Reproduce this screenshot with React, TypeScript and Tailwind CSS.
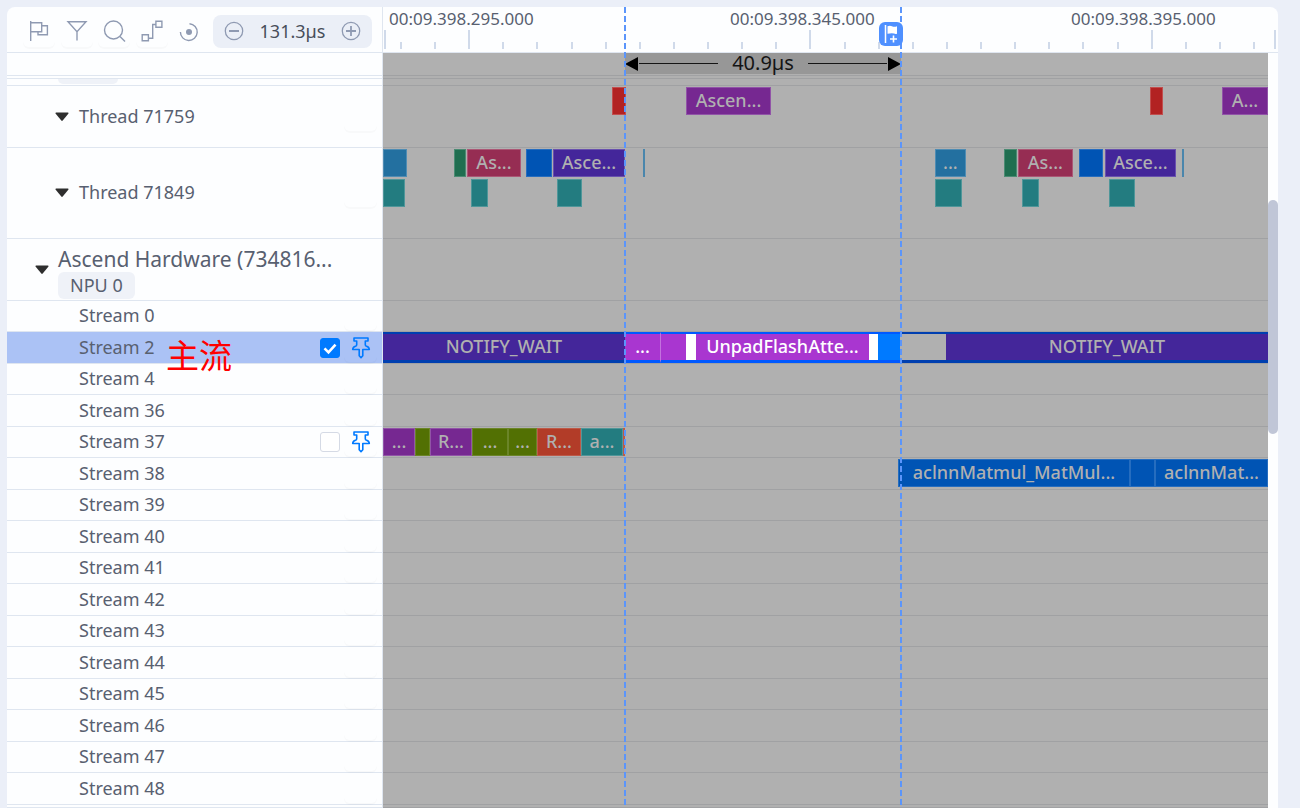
import clsx from "clsx";

interface Slice {
  start: number;
  end: number;
  color: string;
  label?: string;
}

interface Stream {
  name: string;
  slices?: Slice[];
  selected?: boolean;
  checkable?: boolean;
}

// Visible span of the timeline, in canvas units
const SPAN = 885;
const RULER_SPAN = 895;
const pct = (value: number, span = SPAN) => `${(value / span) * 100}%`;

const RED = "bg-[#b22222] border-white/20";
const PURPLE = "bg-[#762891] border-white/20";
const SKY = "bg-[#2370a0] border-white/20";
const TEAL = "bg-[#237c80] border-white/20";
const GREEN = "bg-[#1f6e50] border-white/20";
const PINK = "bg-[#962d53] border-white/20";
const ROYAL = "bg-[#0054b4] border-white/15";
const VIOLET = "bg-[#44269a] border-white/20";
const OLIVE = "bg-[#527003] border-white/15";
const ORANGE = "bg-[#b23c28] border-white/15";

const thread71759: Slice[] = [
  { start: 229, end: 243, color: RED },
  { start: 303, end: 388, color: PURPLE, label: "Ascen..." },
  { start: 767, end: 780, color: RED },
  { start: 839, end: 885, color: PURPLE, label: "A..." },
];

const thread71849Top: Slice[] = [
  { start: 0, end: 24, color: SKY },
  { start: 71, end: 83, color: GREEN },
  { start: 84, end: 138, color: PINK, label: "As..." },
  { start: 143, end: 169, color: ROYAL },
  { start: 170, end: 242, color: VIOLET, label: "Asce..." },
  { start: 260, end: 262, color: "bg-[#4a86ac] border-[#4a86ac]" },
  { start: 552, end: 583, color: SKY, label: "..." },
  { start: 621, end: 634, color: GREEN },
  { start: 635, end: 690, color: PINK, label: "As..." },
  { start: 696, end: 720, color: ROYAL },
  { start: 722, end: 793, color: VIOLET, label: "Asce..." },
  { start: 799, end: 801, color: "bg-[#4a86ac] border-[#4a86ac]" },
];

const thread71849Bottom: Slice[] = [
  { start: 0, end: 22, color: TEAL },
  { start: 88, end: 105, color: TEAL },
  { start: 174, end: 199, color: TEAL },
  { start: 552, end: 579, color: TEAL },
  { start: 639, end: 656, color: TEAL },
  { start: 726, end: 752, color: TEAL },
];

const mainStream: Slice[] = [
  { start: 0, end: 242, color: "bg-[#44269a] border-[#003fb0]", label: "NOTIFY_WAIT" },
  { start: 242, end: 277, color: "bg-[#a936d0] border-[#0059ff] text-white", label: "..." },
  { start: 277, end: 303, color: "bg-[#a936d0] border-[#0059ff] border-l border-l-white/30" },
  { start: 303, end: 313, color: "bg-white border-[#0059ff]" },
  { start: 313, end: 486, color: "bg-[#a936d0] border-[#0059ff] text-white", label: "UnpadFlashAtte..." },
  { start: 486, end: 495, color: "bg-white border-[#0059ff]" },
  { start: 495, end: 517, color: "bg-[#007aff] border-[#0059ff]" },
  { start: 517, end: 563, color: "bg-[#b0b0b0] border-[#003fb0]" },
  { start: 563, end: 885, color: "bg-[#44269a] border-[#003fb0]", label: "NOTIFY_WAIT" },
];

const stream37: Slice[] = [
  { start: 0, end: 32, color: PURPLE, label: "..." },
  { start: 32, end: 47, color: OLIVE },
  { start: 47, end: 89, color: PURPLE, label: "R..." },
  { start: 89, end: 125, color: OLIVE, label: "..." },
  { start: 125, end: 154, color: OLIVE, label: "..." },
  { start: 154, end: 198, color: ORANGE, label: "R..." },
  { start: 198, end: 240, color: TEAL, label: "a..." },
  { start: 240, end: 242, color: ORANGE },
];

const stream38: Slice[] = [
  { start: 515, end: 747, color: ROYAL, label: "aclnnMatmul_MatMul..." },
  { start: 747, end: 772, color: ROYAL },
  { start: 772, end: 885, color: ROYAL, label: "aclnnMat..." },
];

const streams: Stream[] = [
  { name: "Stream 0" },
  { name: "Stream 2", slices: mainStream, selected: true, checkable: true },
  { name: "Stream 4" },
  { name: "Stream 36" },
  { name: "Stream 37", slices: stream37, checkable: true },
  { name: "Stream 38", slices: stream38 },
  { name: "Stream 39" },
  { name: "Stream 40" },
  { name: "Stream 41" },
  { name: "Stream 42" },
  { name: "Stream 43" },
  { name: "Stream 44" },
  { name: "Stream 45" },
  { name: "Stream 46" },
  { name: "Stream 47" },
  { name: "Stream 48" },
];

// One tall tick at each edge, then a tall one for every ten short ones
const ticks = [1, ...Array.from({ length: 26 }, (_, i) => 17 + i * 34.14), 891].map((x, i, all) => ({
  width: (all[i + 1] ?? RULER_SPAN) - x,
  tall: i === 0 || i === all.length - 1 || i % 10 === 3,
}));

function Lane({ slices, framed }: { slices: Slice[]; framed?: boolean }) {
  return (
    <div className={clsx("flex w-full shrink-0 overflow-hidden", framed ? "h-[31px]" : "h-7")}>
      {slices.map((s, i) => (
        <div
          key={s.start}
          className={clsx(
            "flex shrink-0 items-center justify-center overflow-hidden pb-[2px] text-lg leading-6 font-medium whitespace-nowrap",
            framed ? "border-t-2 border-b-3" : "border",
            !s.color.includes("text-white") && "text-[#b0b0b0]",
            s.color
          )}
          style={{
            marginLeft: pct(s.start - (i ? slices[i - 1].end : 0)),
            width: pct(s.end - s.start),
          }}
        >
          {s.label}
        </div>
      ))}
    </div>
  );
}

function Row({
  height,
  side,
  sideClass,
  children,
}: {
  height: string;
  side?: React.ReactNode;
  sideClass?: string;
  children?: React.ReactNode;
}) {
  return (
    <div className={clsx("flex shrink-0", height)}>
      <div className="flex w-[376px] shrink-0 border-r border-b border-[#dfe6f0]">
        <div className={clsx("flex min-w-0 flex-1", sideClass)}>{side}</div>
      </div>
      <div className="min-w-0 flex-1 border-b border-[#a0a1a3] bg-[#b0b0b0]">{children}</div>
    </div>
  );
}

function Caret() {
  return (
    <button type="button" aria-label="Collapse" className="shrink-0">
      <svg width="14" height="10" viewBox="0 0 14 10">
        <path d="M1 .5h12q1 .3.3 1.200L7.700 8.600q-.7.8-1.400 0L.7 1.700Q0 .8 1 .5Z" fill="#2e2e2e" />
      </svg>
    </button>
  );
}

function PinButton({ children, label }: { children?: React.ReactNode; label: string }) {
  return (
    <button
      type="button"
      aria-label={label}
      className="flex h-7 w-[33px] shrink-0 items-center justify-center rounded-md shadow-[0_2px_0_rgba(0,0,0,0.02)]"
    >
      {children}
    </button>
  );
}

function PinIcon() {
  return (
    <svg width="20" height="22" viewBox="0 0 20 22" fill="none" stroke="#007aff" strokeWidth="1.6" strokeLinejoin="round">
      <path d="M3 1h14v3h-2.700v3.700q0 1.200 1.200 1.500 2.800.8 2.800 3.300H11.800v6.300L10 20.700l-1.800-1.900v-6.300H1.700q0-2.500 2.800-3.300 1.200-.3 1.200-1.500V4H3Z" />
    </svg>
  );
}

function ToolButton({ label, shadow = true, children }: { label: string; shadow?: boolean; children: React.ReactNode }) {
  return (
    <button
      type="button"
      aria-label={label}
      className={clsx(
        "flex size-8 items-center justify-center rounded-md",
        shadow && "shadow-[0_2px_0_rgba(0,0,0,0.02)]"
      )}
    >
      <svg width="24" height="24" viewBox="0 0 24 24" fill="none" stroke="#8f9ab2" strokeWidth="1.4">
        {children}
      </svg>
    </button>
  );
}

function Toolbar() {
  return (
    <div className="flex w-[376px] shrink-0 items-center border-r border-[#dfe6f0] pt-[3px] pr-[10px] pl-4">
      <div className="flex flex-1 justify-between">
        <ToolButton label="Flags">
          <path d="M3.7 2v20M3.7 3.7h11v9h-11M14.7 6.8h5.7v9H11v-3" />
        </ToolButton>
        <ToolButton label="Filter">
          <path d="M3 2.7h18l-9 9.9zM12 12.6v9" />
        </ToolButton>
        <ToolButton label="Search">
          <circle cx="11.5" cy="11" r="9" />
          <path d="m18 17.5 5 5" />
        </ToolButton>
        <ToolButton label="Link events">
          <path d="M2.2 15.7h6.2v6H2.2zM15.900 2.2h6v6h-6zM8.400 19.2h4.300V5.500h3.200" />
        </ToolButton>
        <ToolButton label="Reset view" shadow={false}>
          <path d="M12.500 4.700a8.400 8.400 0 1 1-9.100 8.300" />
          <circle cx="12" cy="13" r="3" fill="#8f9ab2" stroke="none" />
        </ToolButton>
      </div>
      <div className="ml-2 flex h-[33px] w-[159px] items-center justify-between rounded-lg bg-[#ebeff7] px-[11px] text-lg text-[#484e5a]">
        <button type="button" aria-label="Zoom out">
          <svg width="20" height="20" viewBox="0 0 20 20" fill="none" stroke="#8f9ab2" strokeWidth="1.3">
            <circle cx="10" cy="10" r="8.7" />
            <path d="M5 10h10" strokeWidth="1.8" />
          </svg>
        </button>
        <span>131.3µs</span>
        <button type="button" aria-label="Zoom in">
          <svg width="20" height="20" viewBox="0 0 20 20" fill="none" stroke="#8f9ab2" strokeWidth="1.3">
            <circle cx="10" cy="10" r="8.7" />
            <path d="M5 10h10M10 5v10" strokeWidth="1.8" />
          </svg>
        </button>
      </div>
    </div>
  );
}

function Ruler() {
  return (
    <div className="flex min-w-0 flex-1 flex-col overflow-hidden">
      <div className="flex h-[23px] text-[17px] leading-6 whitespace-nowrap">
        {["00:09.398.295.000", "00:09.398.345.000", "00:09.398.395.000"].map((time) => (
          <span key={time} className="shrink-0 pl-[6px]" style={{ width: pct(341, RULER_SPAN) }}>
            {time}
          </span>
        ))}
      </div>
      <div className="flex h-[19px] items-end" style={{ paddingLeft: pct(1, RULER_SPAN) }}>
        {ticks.map((tick, i) => (
          <span
            key={i}
            className={clsx("shrink-0 border-l-2 border-[#d0daea]", tick.tall ? "h-[19px]" : "h-[7px]")}
            style={{ width: pct(tick.width, RULER_SPAN - 1) }}
          />
        ))}
      </div>
    </div>
  );
}

function Duration() {
  return (
    <div
      className="flex h-[21px] items-center bg-[#979797] text-xl leading-5 text-[#141414]"
      style={{ marginLeft: pct(242), width: pct(276) }}
    >
      <svg width="14" height="16" viewBox="0 0 14 16" className="shrink-0">
        <path d="M0 8 13 1v14Z" />
      </svg>
      <span className="h-px flex-1 bg-[#141414]" />
      <span className="px-[14px] pb-px">40.9µs</span>
      <span className="h-px flex-1 bg-[#141414]" />
      <svg width="14" height="16" viewBox="0 0 14 16" className="shrink-0">
        <path d="M14 8 1 1v14Z" />
      </svg>
    </div>
  );
}

// Dashed lines at both ends of the chosen range, with the flag marker on the second
function RangeMarkers() {
  return (
    <div className="pointer-events-none absolute inset-y-0 right-[10px] left-[376px]">
      {[241, 517].map((x) => (
        <div
          key={x}
          className="absolute inset-y-0 w-[2px] bg-[repeating-linear-gradient(to_bottom,#5b95fb_0px,#5b95fb_6px,transparent_6px,transparent_9px)]"
          style={{ left: pct(x) }}
        />
      ))}
      <div
        className="absolute top-[15px] flex size-6 items-center justify-center rounded-md bg-[#4f90ff]"
        style={{ left: pct(496) }}
      >
        <svg width="24" height="24" viewBox="0 0 24 24" fill="none" stroke="white">
          <path d="M6.5 3v18" strokeWidth="1.5" />
          <path d="M8.5 4.3q2.500-1 4.500 0t5 0v7.400q-1.500.6-3-.1-2-1-6.500.2Z" fill="white" stroke="none" />
          <path d="M14.5 13.5v7M11 17h7" strokeWidth="1.6" />
        </svg>
      </div>
    </div>
  );
}

function StreamSide({ stream }: { stream: Stream }) {
  return (
    <>
      <label htmlFor={stream.name} className="flex-1 pb-[2px]">
        {stream.name}
      </label>
      {stream.selected && (
        <span className="absolute top-1 left-[159px] z-10 text-[33px] leading-10 text-[#ff0000]">主流</span>
      )}
      {stream.checkable && (
        <span className="mr-1 grid size-5 place-items-center">
          <input
            id={stream.name}
            type="checkbox"
            defaultChecked={stream.selected}
            className="peer col-start-1 row-start-1 size-5 appearance-none rounded-[3px] border border-[#d5dae5] bg-white checked:border-[#007aff] checked:bg-[#007aff]"
          />
          <svg
            width="20"
            height="20"
            viewBox="0 0 20 20"
            className="pointer-events-none col-start-1 row-start-1 hidden peer-checked:block"
          >
            <path d="m4.5 10.3 4 4 7-7.600" fill="none" stroke="white" strokeWidth="2.6" />
          </svg>
        </span>
      )}
      <PinButton label={`Pin ${stream.name}`}>{stream.checkable && <PinIcon />}</PinButton>
    </>
  );
}

export default function App() {
  return (
    <div className="flex h-screen overflow-hidden bg-[#ebeff8] pt-[7px] pr-[22px] pl-[7px] font-['Noto_Sans','Noto_Sans_CJK_SC',sans-serif] text-lg text-[#586070]">
      <main className="relative flex min-w-0 flex-1 flex-col overflow-hidden rounded-t-lg bg-[#fdfeff]">
        <header className="flex h-[46px] shrink-0 border-b border-[#dfe6f0]">
          <Toolbar />
          <Ruler />
        </header>

        <div className="flex min-h-0 flex-1">
          <div className="flex min-w-0 flex-1 flex-col">
            <Row height="h-[23px]">
              <Duration />
            </Row>
            <Row height="h-[3px]" />
            <Row
              height="h-[7px]"
              sideClass="pl-[51px]"
              side={<span className="h-[5px] w-[60px] rounded-b-md bg-[#eff2f8]" />}
            />
            <Row
              height="h-[62px]"
              sideClass="items-center gap-[9px] pr-[5px] pl-12"
              side={
                <>
                  <Caret />
                  <span className="flex-1 pb-[2px] pl-px">Thread 71759</span>
                  <PinButton label="Pin thread 71759" />
                </>
              }
            >
              <div className="pt-px">
                <Lane slices={thread71759} />
              </div>
            </Row>
            <Row
              height="h-[91px]"
              sideClass="items-center gap-[9px] pr-[5px] pl-12"
              side={
                <>
                  <Caret />
                  <span className="flex-1 pb-[2px] pl-px">Thread 71849</span>
                  <PinButton label="Pin thread 71849" />
                </>
              }
            >
              <div className="flex flex-col gap-[2px] pt-px">
                <Lane slices={thread71849Top} />
                <Lane slices={thread71849Bottom} />
              </div>
            </Row>
            <Row
              height="h-[62px]"
              sideClass="items-center gap-[9px] pr-[5px] pl-7"
              side={
                <>
                  <Caret />
                  <div className="flex h-full min-w-0 flex-1 flex-col items-start pt-[7px]">
                    <span className="text-[21px] leading-[26px] whitespace-nowrap">Ascend Hardware (734816...</span>
                    <span className="rounded-md bg-[#eff2f8] px-3 leading-[27px]">NPU 0</span>
                  </div>
                </>
              }
            />
            {streams.map((stream, i) => (
              <Row
                key={stream.name}
                height={i % 2 ? "h-8" : "h-[31px]"}
                sideClass={clsx("relative items-center pr-[5px] pl-[72px]", stream.selected && "bg-[#abc2f5]")}
                side={<StreamSide stream={stream} />}
              >
                {stream.slices && (
                  <div className={clsx(!stream.selected && "pt-px")}>
                    <Lane slices={stream.slices} framed={stream.selected} />
                  </div>
                )}
              </Row>
            ))}
            <Row height="flex-1" />
          </div>
          <div className="w-[10px] shrink-0">
            <div className="mt-[147px] h-[234px] rounded-full bg-[#c0c6d7]" />
          </div>
        </div>

        <RangeMarkers />
      </main>
    </div>
  );
}
